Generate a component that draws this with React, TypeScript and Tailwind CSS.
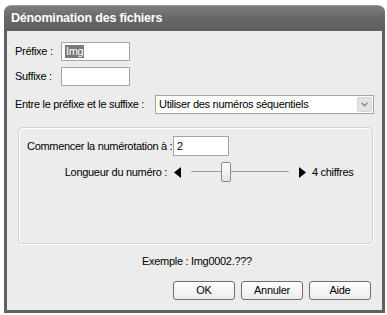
import React from "react";

const font = { fontFamily: '"Liberation Sans", Arial, sans-serif' };

function Field({ width, children }: { width: string; children?: React.ReactNode }) {
  return (
    <div
      className={`flex h-[19px] items-center border border-[#a5a5a5] bg-white pl-[3px] text-[11px] text-black ${width}`}
    >
      {children}
    </div>
  );
}

function Button({ label }: { label: string }) {
  return (
    <button className="flex h-[19px] w-[62px] items-center justify-center rounded-[3px] border border-[#6f6f6f] bg-gradient-to-b from-white to-[#ececec] text-[11px] tracking-[-0.3px] text-black">
      {label}
    </button>
  );
}

export default function App() {
  return (
    <div className="h-[315px] w-[387px] bg-white pl-[4px] pt-[5px]" style={font}>
      <div className="flex h-[308px] w-[381px] flex-col">
        {/* title bar */}
        <div className="flex h-[26px] items-center rounded-t-[7px] border-t border-[#9a9a9a] bg-gradient-to-b from-[#7d7d7d] via-[#676767] to-[#5e5e5e] pl-[7px]">
          <span className="text-[12.5px] font-bold tracking-[-0.2px] text-white">
            Dénomination des fichiers
          </span>
        </div>

        <div className="flex flex-1 flex-col whitespace-nowrap border-x-[3px] border-b-[3px] border-[#606060] bg-[#ececec] pl-[8px] pt-[11px] text-[11px] tracking-[-0.3px] text-black">
          <div className="flex h-[19px] items-center">
            <span className="w-[46px]">Préfixe :</span>
            <Field width="w-[69px]">
              <span className="bg-[#7a7a7a] px-[1px] leading-[13px] text-white">Img</span>
            </Field>
          </div>
          <div className="mt-[6px] flex h-[19px] items-center">
            <span className="w-[46px]">Suffixe :</span>
            <Field width="w-[69px]" />
          </div>

          <div className="mt-[9px] flex h-[19px] items-center">
            <span className="w-[140px]">Entre le préfixe et le suffixe :</span>
            <div className="flex h-[19px] w-[219px] items-center justify-between border border-[#a5a5a5] bg-white pl-[3px]">
              <span>Utiliser des numéros séquentiels</span>
              <div className="mr-[1px] flex h-[15px] w-[15px] items-center justify-center rounded-[2px] border border-[#d2d2d2] bg-[#e4e4e4]">
                <svg width="7" height="5" viewBox="0 0 7 5">
                  <path d="M0.5 0.8 L3.5 3.8 L6.5 0.8" fill="none" stroke="#8a8a8a" strokeWidth="1.4" />
                </svg>
              </div>
            </div>
          </div>

          {/* group box */}
          <div className="ml-[3px] mt-[13px] h-[117px] w-[355px] rounded-[4px] border border-[#d3d3d3] pl-[8px] pt-[8px] shadow-[inset_1px_1px_0_#fff,1px_1px_0_#fff]">
            <div className="flex h-[20px] items-center">
              <span className="w-[146px]">Commencer la numérotation à :</span>
              <Field width="w-[56px] h-[20px]">2</Field>
            </div>
            <div className="mt-[6px] flex h-[20px] items-center">
              <span className="w-[140px] text-right">Longueur du numéro :</span>
              <svg className="ml-[7px]" width="7" height="11" viewBox="0 0 7 11">
                <path d="M7 0 L0 5.5 L7 11 Z" fill="#000" />
              </svg>
              <div className="relative ml-[10px] h-[20px] w-[98px]">
                <div className="absolute left-0 right-0 top-[9px] h-[2px] border-t border-[#9c9c9c] border-b-white" />
                <div className="absolute left-[30px] top-0 h-[20px] w-[10px] rounded-[2px] border border-[#8a8a8a] bg-gradient-to-b from-white to-[#e2e2e2]" />
              </div>
              <svg className="ml-[10px]" width="7" height="11" viewBox="0 0 7 11">
                <path d="M0 0 L7 5.5 L0 11 Z" fill="#000" />
              </svg>
              <span className="ml-[6px]">4 chiffres</span>
            </div>
          </div>

          <div className="ml-[127px] mt-[11px] leading-[13px]">Exemple : Img0002.???</div>

          <div className="mt-[13px] flex gap-[6px] pl-[158px]">
            <Button label="OK" />
            <Button label="Annuler" />
            <Button label="Aide" />
          </div>
        </div>
      </div>
    </div>
  );
}
